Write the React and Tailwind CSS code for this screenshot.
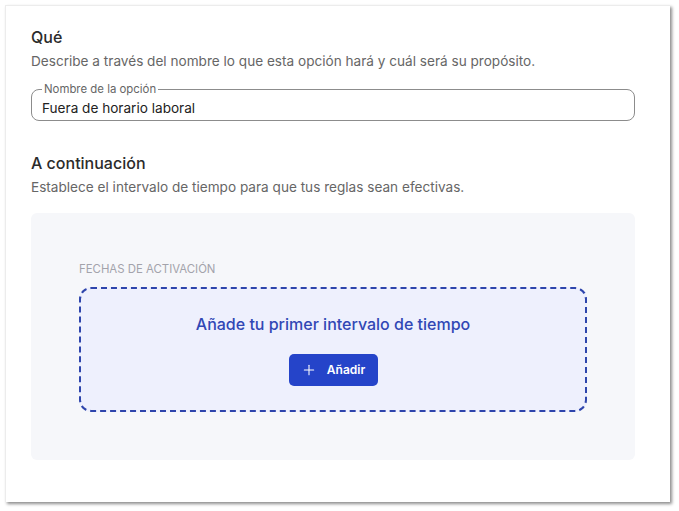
import { Plus } from "lucide-react";

export default function App() {
  return (
    <div className="min-h-screen bg-white pl-[5px] pt-[5px] font-['Inter',sans-serif] text-[#2b2b2b]">
      <div className="flex h-[497px] w-[665px] flex-col border-l border-t border-[#ececec] bg-white pl-[25px] pr-[35px] pt-[21px] shadow-[2px_2px_3px_rgba(0,0,0,0.45)]">
        <h2 className="text-[16px] font-medium leading-[20px]">Qué</h2>
        <p className="mt-[5px] text-[13.6px] leading-[18px] text-[#666]">
          Describe a través del nombre lo que esta opción hará y cuál será su propósito.
        </p>

        <fieldset className="mt-[13px] h-[38px] rounded-[8px] border border-[#8c8c8c] px-[10px]">
          <legend className="px-[2px] text-[11.4px] leading-[12px] text-[#666]">Nombre de la opción</legend>
          <input
            defaultValue="Fuera de horario laboral"
            className="mt-[1px] w-full bg-transparent text-[13.6px] leading-[18px] text-[#222] outline-none"
          />
        </fieldset>

        <h2 className="mt-[32px] text-[16px] font-medium leading-[20px]">A continuación</h2>
        <p className="mt-[5px] text-[13.6px] leading-[18px] text-[#666]">
          Establece el intervalo de tiempo para que tus reglas sean efectivas.
        </p>

        <div className="mt-[17px] flex h-[247px] flex-col rounded-[6px] bg-[#f6f7fa] px-[48px] pt-[49px]">
          <span className="text-[11.4px] uppercase leading-[14px] text-[#a3a3ab]">Fechas de activación</span>
          <div className="mt-[11px] flex h-[125px] flex-col items-center rounded-[12px] border-2 border-dashed border-[#2e45ac] bg-[#eef0fd] pt-[25px]">
            <p className="text-[16px] font-medium leading-[20px] text-[#3147b5]">
              Añade tu primer intervalo de tiempo
            </p>
            <button className="mt-[20px] flex h-[32px] w-[89px] items-center justify-center gap-[10px] rounded-[5px] bg-[#2544c9] text-[12px] font-semibold text-white">
              <Plus size={16} strokeWidth={1.6} />
              Añadir
            </button>
          </div>
        </div>
      </div>
    </div>
  );
}
